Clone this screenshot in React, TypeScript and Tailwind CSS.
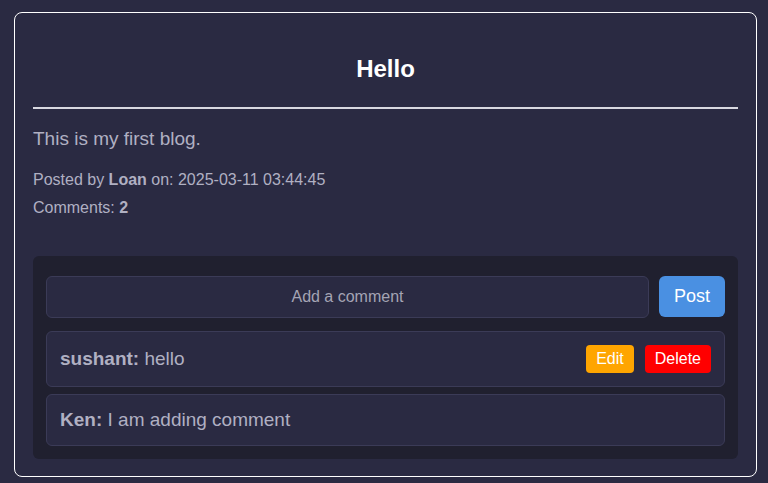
import React from 'react';

const comments = [
  { user: 'sushant', text: 'hello', own: true },
  { user: 'Ken', text: 'I am adding comment', own: false },
];

const App: React.FC = () => {
  return (
    <div className="min-h-screen bg-[#2a2a42] pt-[12px] pl-[14px] font-['Liberation_Sans',Arial,sans-serif] text-[#b0b0c2]">
      <div className="w-[743px] border border-white rounded-[8px] px-[18px] pt-[42px] pb-[17px]">
        <h1 className="text-center text-[24px] font-bold text-white leading-[1.15]">Hello</h1>
        <hr className="mt-[24px] border-0 h-[2px] bg-[#d8d8e0]" />

        <p className="mt-[19px] text-[19px] leading-[1.15]">This is my first blog.</p>
        <p className="mt-[22px] text-[16px] leading-[1.15]">
          Posted by <b>Loan</b> on: 2025-03-11 03:44:45
        </p>
        <p className="mt-[9px] text-[16px] leading-[1.15]">
          Comments: <b>2</b>
        </p>

        {/* Comments */}
        <div className="mt-[39px] bg-[#20202f] rounded-[6px] px-[13px] pt-[20px] pb-[13px]">
          <div className="flex items-start gap-[10px]">
            <div className="flex-1 h-[42px] rounded-[6px] border border-[#3b3b57] bg-[#2a2a42] flex items-center justify-center text-[16px] text-[#a4a4b4]">
              Add a comment
            </div>
            <button className="h-[41px] px-[15px] rounded-[6px] bg-[#4a90e2] text-white text-[18px]">Post</button>
          </div>

          <div className="mt-[13px] flex flex-col gap-[7px]">
            {comments.map((c) => (
              <div
                key={c.user}
                className="flex items-center justify-between rounded-[6px] border border-[#3b3b57] bg-[#2a2a42] px-[13px] py-[13px]"
              >
                <span className="text-[19px] leading-[24px]">
                  <b>{c.user}:</b> {c.text}
                </span>
                {c.own && (
                  <div className="flex gap-[11px]">
                    <button className="h-[28px] px-[10px] rounded-[4px] bg-[#ffa500] text-white text-[16px]">Edit</button>
                    <button className="h-[28px] px-[10px] rounded-[4px] bg-[#ff0000] text-white text-[16px]">Delete</button>
                  </div>
                )}
              </div>
            ))}
          </div>
        </div>
      </div>
    </div>
  );
};

export default App;
